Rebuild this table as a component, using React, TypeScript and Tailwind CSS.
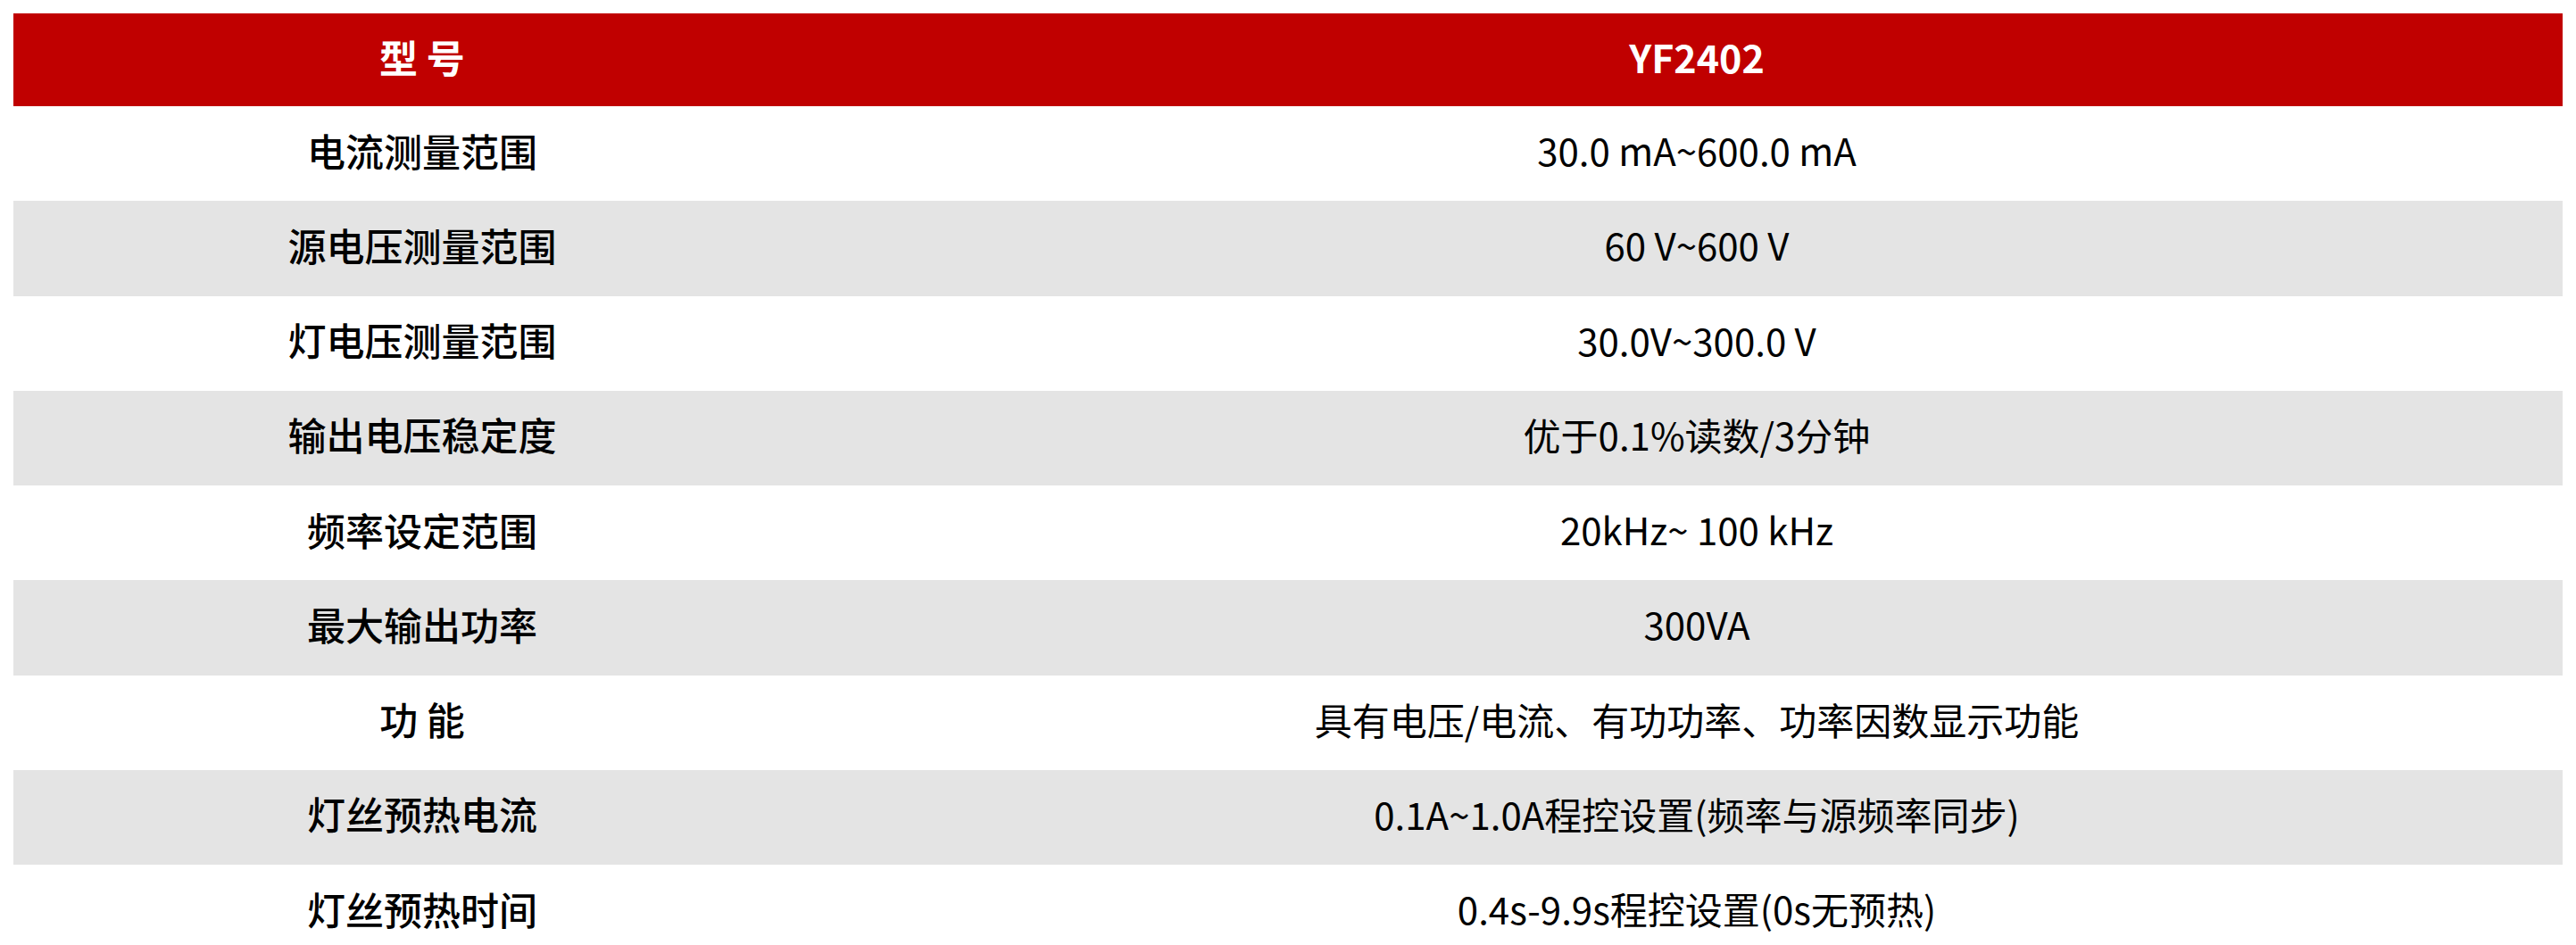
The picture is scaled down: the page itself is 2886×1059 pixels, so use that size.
import React from "react";

const rows: [string, string][] = [
  ["电流测量范围", "30.0 mA~600.0 mA"],
  ["源电压测量范围", "60 V~600 V"],
  ["灯电压测量范围", "30.0V~300.0 V"],
  ["输出电压稳定度", "优于0.1%读数/3分钟"],
  ["频率设定范围", "20kHz~ 100 kHz"],
  ["最大输出功率", "300VA"],
  ["功 能", "具有电压/电流、有功功率、功率因数显示功能"],
  ["灯丝预热电流", "0.1A~1.0A程控设置(频率与源频率同步)"],
  ["灯丝预热时间", "0.4s-9.9s程控设置(0s无预热)"],
];

export default function App() {
  return (
    <div
      className="w-[2886px] h-[1059px] overflow-hidden bg-white pt-[15px] pl-[15px] text-black"
      style={{ fontFamily: '"Noto Sans CJK SC", "Noto Sans", sans-serif' }}
    >
      <div className="w-[2856px] flex flex-col">
        <div className="flex h-[104px] bg-[#c00000] text-white font-bold text-[43px] leading-none">
          <div className="w-[916px] flex items-center justify-center whitespace-pre pb-[8px]">型 号</div>
          <div className="flex-1 flex items-center justify-center pb-[8px]">YF2402</div>
        </div>
        {rows.map(([k, v], i) => (
          <div
            key={k}
            className={`flex h-[106.25px] shrink-0 leading-none ${i % 2 === 1 ? "bg-[#e4e4e4]" : "bg-white"}`}
          >
            <div className="w-[916px] flex items-center justify-center font-medium whitespace-pre text-[43px] pb-[8px]">{k}</div>
            <div className="flex-1 flex items-center justify-center whitespace-pre text-[42px] pb-[8px]">{v}</div>
          </div>
        ))}
      </div>
    </div>
  );
}
